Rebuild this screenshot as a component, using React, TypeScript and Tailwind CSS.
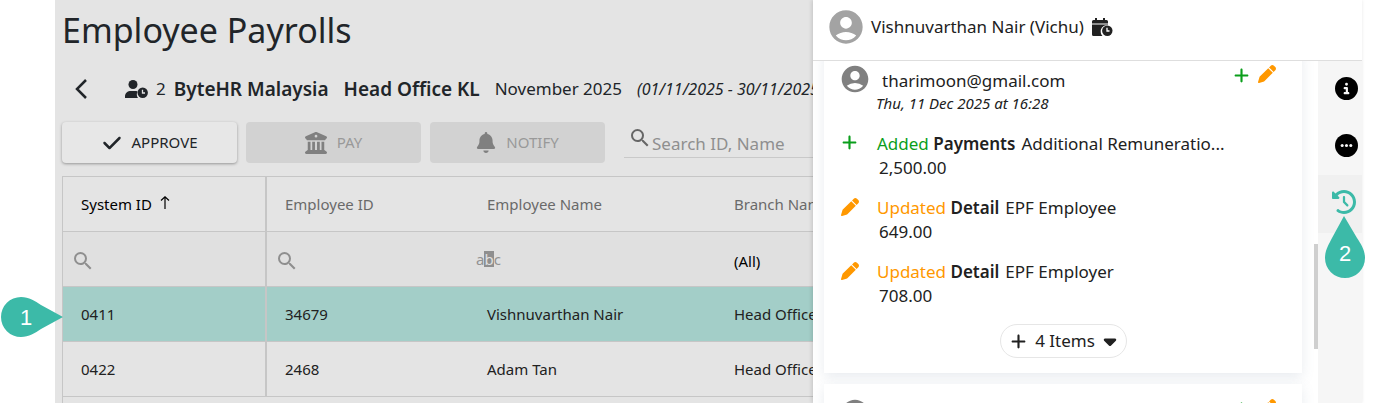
import React from 'react';
import clsx from 'clsx';
import {
  FaBell,
  FaBuildingColumns,
  FaCaretDown,
  FaCheck,
  FaCircleInfo,
  FaClockRotateLeft,
  FaPen,
  FaPlus,
} from 'react-icons/fa6';
import { MdAccountCircle, MdSearch } from 'react-icons/md';

interface Employee {
  systemId: string;
  employeeId: string;
  name: string;
  branch: string;
}

interface Change {
  kind: 'added' | 'updated';
  group: string;
  label: string;
  value: string;
}

const EMPLOYEES: Employee[] = [
  { systemId: '0411', employeeId: '34679', name: 'Vishnuvarthan Nair', branch: 'Head Office KL' },
  { systemId: '0422', employeeId: '2468', name: 'Adam Tan', branch: 'Head Office KL' },
];

const CHANGES: Change[] = [
  { kind: 'added', group: 'Payments', label: 'Additional Remuneratio...', value: '2,500.00' },
  { kind: 'updated', group: 'Detail', label: 'EPF Employee', value: '649.00' },
  { kind: 'updated', group: 'Detail', label: 'EPF Employer', value: '708.00' },
];

const UserClockIcon = () => (
  <svg viewBox="0 0 23 18" className="w-[23px] h-[18px] shrink-0" fill="currentColor" aria-hidden="true">
    <circle cx="8" cy="4.500" r="4.500" />
    <path d="M0 18v-1.500C0 13 2.500 11 6 11h4c1 0 1.800 0.100 2.500 0.400C11.500 13.500 11.500 16 13 18z" />
    <circle cx="17.700" cy="12.700" r="5.200" />
    <path d="M17.500 9.700v3.300h2.500" fill="none" stroke="#e4e4e4" strokeWidth="1.300" />
  </svg>
);

const CalendarClockIcon = () => (
  <svg viewBox="0 0 21 18" className="w-[21px] h-[18px]" fill="currentColor" aria-hidden="true">
    <path d="M0 5.500V3.500a1.500 1.500 0 0 1 1.500-1.500H3V0h2v2h6V0h2v2h1.500A1.500 1.500 0 0 1 16 3.500v2z" />
    <path d="M0 6.500h16v0.500c-4.500 0-7.300 3-7.300 6.200 0 2 0.600 3.600 1.800 4.800h-9A1.500 1.500 0 0 1 0 16.500z" />
    <circle cx="15.300" cy="12.700" r="5.200" />
    <path d="M15 9.700v3.300h2.500" fill="none" stroke="#fff" strokeWidth="1.300" />
  </svg>
);

const EllipsisCircleIcon = () => (
  <svg viewBox="0 0 24 24" className="w-[23px] h-[23px]" aria-hidden="true">
    <circle cx="12" cy="12" r="12" fill="currentColor" />
    <g fill="#f6f6f6">
      <circle cx="7.500" cy="12" r="1.600" />
      <circle cx="12" cy="12" r="1.600" />
      <circle cx="16.500" cy="12" r="1.600" />
    </g>
  </svg>
);

const SortArrow = () => (
  <svg viewBox="0 0 10 13" className="w-[10px] h-[13px] -mt-1" fill="none" stroke="currentColor" strokeWidth="1.200" aria-hidden="true">
    <path d="M5 13V1M1 4.500L5 0.800l4 3.700" />
  </svg>
);

const PayrollSummary = () => (
  <div className="flex items-center h-6 mt-5 pl-5 whitespace-nowrap">
    <button type="button" aria-label="Back" className="w-[50px] shrink-0">
      <svg viewBox="0 0 12 20" className="w-3 h-5" fill="none" stroke="currentColor" strokeWidth="2.500" aria-hidden="true">
        <path d="M11 1L2 10l9 9" />
      </svg>
    </button>
    <UserClockIcon />
    <span className="ml-2 text-[17px]">2</span>
    <span className="ml-2 text-[19px] font-semibold">ByteHR Malaysia</span>
    <span className="ml-[15px] text-[19px] font-semibold">Head Office KL</span>
    <span className="ml-[15px] text-[17px]">November 2025</span>
    <span className="ml-[15px] text-[16px] italic">(01/11/2025 - 30/11/2025)</span>
  </div>
);

interface ActionButtonProps {
  icon: React.ReactNode;
  label: string;
  disabled?: boolean;
}

const ActionButton: React.FC<ActionButtonProps> = ({ icon, label, disabled }) => (
  <button
    type="button"
    disabled={disabled}
    className={clsx(
      'flex items-center justify-center gap-2.5 w-[175px] h-[41px] shrink-0 rounded text-[15px]',
      disabled ? 'bg-[#d2d2d2] text-[#999]' : 'bg-[#e7e7e7] text-[#212529] shadow-[0_1px_3px_rgba(0,0,0,0.35)]'
    )}
  >
    {icon}
    {label}
  </button>
);

const Toolbar = () => (
  <div className="flex gap-[9px] mt-[21px] ml-[7px]">
    <ActionButton icon={<FaCheck className="w-5 h-5" />} label="APPROVE" />
    <ActionButton disabled icon={<FaBuildingColumns className="w-[22px] h-[22px] text-[#808080]" />} label="PAY" />
    <ActionButton disabled icon={<FaBell className="w-5 h-[21px] text-[#808080]" />} label="NOTIFY" />
    <label className="flex items-center h-9 ml-2.5 pl-1 min-w-[240px] border-b border-[#c9c9c9]">
      <MdSearch className="w-6 h-6 -mt-1 text-[#666]" />
      <input
        type="text"
        aria-label="Search ID, Name"
        placeholder="Search ID, Name"
        className="mt-2 w-48 bg-transparent text-[17px] placeholder:text-[#8f8f8f] outline-none"
      />
    </label>
  </div>
);

const PayrollTable = () => (
  <div className="mt-[13px] ml-[7px] flex-1 border-l border-t border-[#c6c6c6] overflow-hidden">
    <table className="table-fixed w-[920px] border-separate border-spacing-0 text-[15px] text-[#212121]">
      <colgroup>
        <col className="w-[204px]" />
        <col className="w-[202px]" />
        <col className="w-[247px]" />
        <col />
      </colgroup>
      <thead className="text-left text-[#6a6a6a]">
        <tr className="h-[55px]">
          <th className="pl-[18px] font-normal text-black border-b border-r-2 border-[#c6c6c6]">
            <span className="flex items-center gap-2">
              System ID
              <SortArrow />
            </span>
          </th>
          <th className="pl-[18px] font-normal border-b border-[#c6c6c6]">Employee ID</th>
          <th className="pl-[18px] font-normal border-b border-[#c6c6c6]">Employee Name</th>
          <th className="pl-[18px] font-normal border-b border-[#c6c6c6]">Branch Name</th>
        </tr>
        <tr className="h-[55px] bg-[#e0e0e0]">
          <td className="pl-2 pt-1 border-b border-r-2 border-[#c6c6c6]">
            <label className="flex items-center">
              <MdSearch className="w-6 h-6 text-[#8f8f8f]" />
              <input type="text" aria-label="Filter System ID" className="w-36 bg-transparent outline-none" />
            </label>
          </td>
          <td className="pl-2 pt-1 border-b border-[#c6c6c6]">
            <label className="flex items-center">
              <MdSearch className="w-6 h-6 text-[#8f8f8f]" />
              <input type="text" aria-label="Filter Employee ID" className="w-36 bg-transparent outline-none" />
            </label>
          </td>
          <td className="pl-[7px] border-b border-[#c6c6c6]">
            <label className="flex items-center text-[#929292]">
              <span className="flex leading-4">
                a<span className="bg-[#8f8f8f] text-[#e0e0e0]">b</span>c
              </span>
              <input type="text" aria-label="Filter Employee Name" className="w-44 bg-transparent outline-none" />
            </label>
          </td>
          <td className="pl-[18px] pt-1 border-b border-[#c6c6c6]">
            <select aria-label="Filter Branch Name" className="appearance-none w-40 bg-transparent text-black outline-none">
              <option>(All)</option>
            </select>
          </td>
        </tr>
      </thead>
      <tbody>
        {EMPLOYEES.map((employee, index) => (
          <tr key={employee.systemId} className={clsx('h-[55px]', index === 0 && 'bg-[#a3cec8]')}>
            <td className="pl-[18px] border-b border-r-2 border-[#c6c6c6]">{employee.systemId}</td>
            <td className="pl-[18px] border-b border-[#c6c6c6]">{employee.employeeId}</td>
            <td className="pl-[18px] border-b border-[#c6c6c6]">{employee.name}</td>
            <td className="pl-[18px] border-b border-[#c6c6c6]">{employee.branch}</td>
          </tr>
        ))}
      </tbody>
    </table>
  </div>
);

const ChangeRow: React.FC<{ change: Change }> = ({ change }) => {
  const added = change.kind === 'added';
  return (
    <li className="flex">
      <span className="w-9 shrink-0 pt-0.5">
        {added ? <FaPlus className="w-[17px] h-[17px] text-[#0a9e1b]" /> : <FaPen className="w-[18px] h-[18px] text-[#ff9800]" />}
      </span>
      <div className="leading-6">
        <p className="whitespace-nowrap">
          <span className={added ? 'text-[#0a9e1b]' : 'text-[#ff9800]'}>{added ? 'Added' : 'Updated'}</span>{' '}
          <span className="font-semibold">{change.group}</span>
          <span className="ml-1.5">{change.label}</span>
        </p>
        <p className="pl-0.5">{change.value}</p>
      </div>
    </li>
  );
};

const HistoryCard: React.FC<{ children?: React.ReactNode }> = ({ children }) => (
  <article className="shrink-0 bg-white shadow-[0_4px_12px_rgba(100,120,150,0.15)] pt-[15px] pl-[17px] pr-[26px]">
    <header className="flex">
      <MdAccountCircle className="w-8 h-8 -ml-0.5 -mt-0.5 text-[#808080]" />
      <div className="ml-[5px] pt-1">
        <p className="pl-1.5 text-[17px] leading-6">tharimoon@gmail.com</p>
        <p className="text-[15px] leading-5 italic">Thu, 11 Dec 2025 at 16:28</p>
      </div>
      <div className="ml-auto flex gap-2">
        <FaPlus className="w-[17px] h-[17px] mt-0.5 text-[#0a9e1b]" />
        <FaPen className="w-[18px] h-[18px] text-[#ff9800]" />
      </div>
    </header>
    {children}
  </article>
);

const HistoryDrawer = () => (
  <aside className="z-10 flex flex-col w-[549px] shrink-0 bg-white text-[#212121] shadow-[-1px_0_4px_rgba(0,0,0,0.15)]">
    <header className="flex items-center h-[61px] shrink-0 pl-[13px] pb-1.5 border-b border-[#dedede]">
      <MdAccountCircle className="w-10 h-10 text-[#a3a3a3]" />
      <h2 className="ml-[5px] mr-2 text-[17px]">Vishnuvarthan Nair (Vichu)</h2>
      <CalendarClockIcon />
    </header>
    <div className="flex flex-1 min-h-0">
      <div className="flex-1 min-w-0 pl-[11px] pr-3 overflow-hidden">
        {/* List sits slightly scrolled */}
        <div className="flex flex-col gap-[11px] -mt-[11px]">
          <HistoryCard>
            <ul className="mt-[19px] flex flex-col gap-4 text-[17px]">
              {CHANGES.map((change) => (
                <ChangeRow key={change.label} change={change} />
              ))}
            </ul>
            <div className="flex justify-center mt-4 pb-[15px] pl-2.5">
              <button type="button" className="flex items-center gap-2 h-[34px] px-[9px] rounded-full border border-[#e6e6e6] text-[17px]">
                <FaPlus className="w-[17px] h-[17px]" />
                4 Items
                <FaCaretDown className="w-[14px] h-5" />
              </button>
            </div>
          </HistoryCard>
          <HistoryCard />
        </div>
      </div>
      <div className="w-1 pt-[183px]">
        <div className="h-[105px] bg-[#cfcfcf]" />
      </div>
      <nav className="flex flex-col w-11 bg-[#f6f6f6] text-black">
        <button type="button" aria-label="Information" className="flex justify-center items-center h-[57px] pl-3 pb-0.5">
          <FaCircleInfo className="w-[23px] h-[23px]" />
        </button>
        <button type="button" aria-label="More" className="flex justify-center items-center h-[57px] pl-3 pb-0.5">
          <EllipsisCircleIcon />
        </button>
        <button type="button" aria-label="History" className="flex justify-center items-center h-[58px] pl-2 pb-1 bg-[#f0f0f0] text-[#3cbaa8]">
          <FaClockRotateLeft className="w-6 h-6" />
        </button>
      </nav>
    </div>
  </aside>
);

export default function App() {
  return (
    <div className="relative flex h-screen overflow-hidden bg-white pl-[55px] pr-3 font-['Noto_Sans',sans-serif] text-[#212529]">
      <main className="flex-1 min-w-0 flex flex-col overflow-hidden bg-[#e4e4e4]">
        <h1 className="mt-1 ml-[7px] text-[34px] leading-[53px] whitespace-nowrap">Employee Payrolls</h1>
        <PayrollSummary />
        <Toolbar />
        <PayrollTable />
      </main>
      <HistoryDrawer />

      {/* Step markers float above the page */}
      <div className="absolute z-20 left-px top-[297px] w-[62px] h-10 font-['Liberation_Sans',sans-serif] text-[22px] text-white">
        <svg viewBox="0 0 62 40" className="absolute inset-0 w-full h-full" fill="#3cbaa8" aria-hidden="true">
          <path d="M62 20L40 8C34 4 28 0 20 0a20 20 0 0 0 0 40c8 0 14-4 20-8z" />
        </svg>
        <span className="relative flex w-[50px] h-full items-center justify-center">1</span>
      </div>
      <div className="absolute z-20 right-[9px] top-[216px] w-10 h-[62px] font-['Liberation_Sans',sans-serif] text-[22px] text-white">
        <svg viewBox="0 0 40 62" className="absolute inset-0 w-full h-full" fill="#3cbaa8" aria-hidden="true">
          <path d="M19 0L32 22c4 6 8 12 8 20a20 20 0 0 1-40 0c0-8 4-14 7-20z" />
        </svg>
        <span className="relative flex h-[74px] items-center justify-center">2</span>
      </div>
    </div>
  );
}
